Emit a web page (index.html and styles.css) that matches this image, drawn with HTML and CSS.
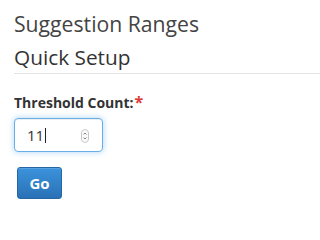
FILE: index.html
```html
<!DOCTYPE html>
<html>
<head><meta charset="utf-8"><link rel="stylesheet" href="styles.css"></head>
<body>
<h1 class="page-title">Suggestion Ranges</h1>
<h2 class="section-title">Quick Setup</h2>
<form class="form">
  <label class="field-label">Threshold Count:<span class="req">*</span></label>
  <div class="num-input">
    <span class="value">11</span><span class="caret"></span>
    <svg class="spin" width="8" height="14" viewBox="0 0 8 14">
      <rect x="0.5" y="0.5" width="7" height="13" rx="3.5" fill="#fafafa" stroke="#c8c8c8"/>
      <path d="M2.5 5.5 L4 4 L5.5 5.5" fill="none" stroke="#777" stroke-width="0.9"/>
      <path d="M2.5 8.5 L4 10 L5.5 8.5" fill="none" stroke="#777" stroke-width="0.9"/>
    </svg>
  </div>
  <button type="button" class="btn-go">Go</button>
</form>
</body>
</html>
```
FILE: styles.css
```css
html,body{background:#fff}
body{margin:0;padding:0 0 0 14px;font-family:"Open Sans",sans-serif;color:#333}
.page-title{margin:12px 0 0;font-size:21.2px;line-height:24px;font-weight:400;color:#444;white-space:nowrap}
.section-title{margin:9px 0 0;padding-bottom:4px;border-bottom:1px solid #e3e3e3;font-size:20.8px;line-height:24px;font-weight:400;color:#333;white-space:nowrap}
.form{display:flex;flex-direction:column;align-items:flex-start}
.field-label{margin-top:19px;font-size:14px;line-height:20px;font-weight:700;color:#333}
.req{color:#e03a3a;font-size:16px;line-height:14px;vertical-align:top;position:relative;top:2px;margin-left:1px}
.num-input{margin-top:5px;box-sizing:border-box;width:89px;height:34px;border:1px solid #66afe9;border-radius:4px;box-shadow:inset 0 1px 1px rgba(0,0,0,.075),0 0 6px rgba(102,175,233,.55);display:flex;align-items:center;padding:0 0 0 12px}
.value{font-size:15px;line-height:20px;color:#333;letter-spacing:0}
.caret{width:1px;height:15px;background:#222;margin-left:1px}
.spin{margin-left:auto;margin-right:13px;margin-top:1px}
.btn-go{margin:15px 0 0 3px;box-sizing:border-box;width:45px;height:32px;padding:0;border:1px solid #2566a3;border-radius:3px;background:linear-gradient(#3b93dc,#2a71b6);color:#fff;font-family:"Open Sans",sans-serif;font-size:15px;font-weight:700;line-height:20px;box-shadow:inset 0 1px 0 rgba(255,255,255,.15)}
```
